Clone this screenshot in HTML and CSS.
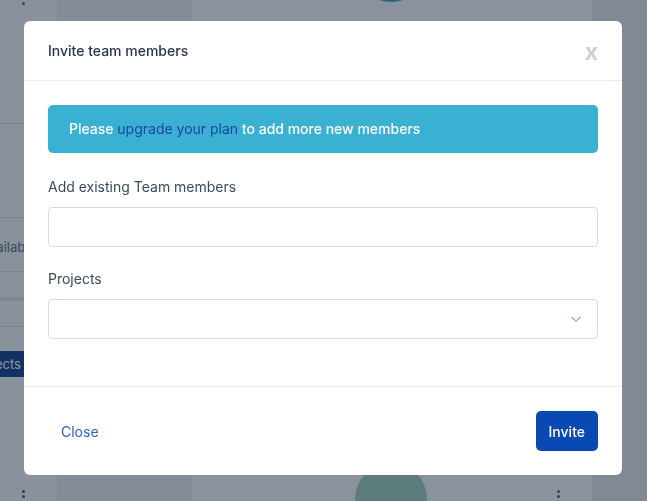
FILE: index.html
```html
<!DOCTYPE html>
<html lang="en">

<head>
    <meta charset="UTF-8" />
    <meta name="viewport" content="width=device-width, initial-scale=1.0" />
    <title>Invite team members</title>
    <link rel="stylesheet" href="styles.css">
</head>

<body>
    <!-- page behind the modal -->
    <div class="page">
        <div class="rail">
            <span class="dots top"></span>
            <div class="rows">
                <div class="row r1"></div>
                <div class="row r2"><span>Available</span></div>
                <div class="row r3"></div>
                <div class="row r4"></div>
                <div class="row r5"><span class="btn-dark">Projects</span></div>
            </div>
            <span class="dots bottom"></span>
        </div>
        <div class="col-side"></div>
        <div class="col-main">
            <span class="avatar top"></span>
            <span class="avatar bottom"></span>
            <span class="dots right"></span>
        </div>
        <div class="col-edge"></div>
    </div>

    <div class="backdrop"></div>

    <div class="modal">
        <div class="modal-header">
            <h5>Invite team members</h5>
            <button type="button" class="close">x</button>
        </div>
        <div class="modal-body">
            <div class="alert">
                Please <a href="#">upgrade your plan</a> to add more new members
            </div>
            <div class="form-group first">
                <label for="members">Add existing Team members</label>
                <input type="text" id="members" />
            </div>
            <div class="form-group">
                <label for="projects">Projects</label>
                <div class="select" id="projects">
                    <svg width="12" height="8" viewBox="0 0 12 8">
                        <path d="M1.5 2 L6 6.2 L10.5 2" fill="none" stroke="#9aa8bf" stroke-width="1.2" />
                    </svg>
                </div>
            </div>
        </div>
        <div class="modal-footer">
            <button type="button" class="btn-link">Close</button>
            <button type="button" class="btn-primary">Invite</button>
        </div>
    </div>
</body>

</html>
```

FILE: styles.css
```css
body {
    margin: 0;
    font-family: Inter, "Noto Sans", sans-serif;
    font-size: 14px;
    color: #2c3a4d;
    overflow: hidden;
}

.page {
    display: flex;
    height: 501px;
    overflow: hidden;
    background-color: #fbfcfe;
}

.rail {
    width: 57px;
    position: relative;
    overflow: hidden;
    background-color: #f9fafc;
}

.rows {
    padding-top: 123px;
}

.row {
    border-top: 1px solid #d9dee6;
    display: flex;
    align-items: center;
    white-space: nowrap;
}

.r1 {
    height: 93px;
}

.r2 {
    height: 54px;
    color: #5c6b80;
    font-size: 13px;
    padding-top: 4px;
    box-sizing: border-box;
}

.r2 span {
    margin-left: -19px;
}

.r3 {
    height: 25px;
}

.r4 {
    height: 25px;
    border-top: 4px solid #e3e7ed;
}

.r5 {
    height: 75px;
    align-items: flex-start;
}

.btn-dark {
    background-color: #0a3d8c;
    color: #fff;
    font-size: 13px;
    line-height: 26px;
    padding: 0 8px;
    margin: 24px 0 0 -37px;
}

.dots {
    position: absolute;
    width: 3px;
    height: 3px;
    border-radius: 50%;
    background-color: #3b5d99;
    box-shadow: 0 5px 0 #3b5d99;
}

.dots.top {
    left: 22px;
    top: -3px;
}

.dots.bottom {
    left: 22px;
    top: 490px;
}

.dots.right {
    right: 32px;
    top: 490px;
}

.col-side {
    width: 135px;
    background-color: #eef1f8;
}

.col-main {
    flex: 1;
    position: relative;
    overflow: hidden;
    background-color: #fbfcfe;
}

.avatar {
    position: absolute;
    width: 72px;
    height: 72px;
    border-radius: 50%;
    left: 163px;
}

.avatar.top {
    top: -70px;
    background-color: #3fa3b0;
}

.avatar.bottom {
    top: 463px;
    background-color: #9ed0bc;
}

.col-edge {
    width: 55px;
    background-color: #e8ebf2;
}

.backdrop {
    position: fixed;
    inset: 0;
    background-color: rgba(25, 40, 60, 0.5);
}

.modal {
    position: fixed;
    left: 24px;
    top: 21px;
    width: 598px;
    background-color: #fff;
    border-radius: 6px;
}

.modal-header {
    display: flex;
    align-items: center;
    justify-content: space-between;
    height: 59px;
    padding: 0 24px;
    border-bottom: 1px solid #e6ecf4;
}

.modal-header h5 {
    margin: 0;
    font-size: 14px;
    font-weight: 500;
    color: #2a3547;
}

.close {
    background: none;
    border: none;
    padding: 0;
    margin: 2px 0 0;
    font-family: inherit;
    font-size: 23px;
    line-height: 20px;
    font-weight: 700;
    color: #c8d2df;
    cursor: pointer;
}

.modal-body {
    padding: 24px 24px 47px;
}

.alert {
    height: 48px;
    line-height: 48px;
    padding: 0 21px;
    border-radius: 5px;
    background-color: #3ab0d3;
    color: #fff;
    font-weight: 500;
}

.alert a {
    color: #1846a6;
    font-weight: 400;
    text-decoration: none;
}

.form-group {
    margin-top: 22px;
}

.form-group.first {
    margin-top: 24px;
}

label {
    display: block;
    line-height: 20px;
    margin-bottom: 10px;
    color: #3d4a5c;
}

input,
.select {
    display: block;
    box-sizing: border-box;
    width: 100%;
    height: 40px;
    border: 1px solid #d4dde9;
    border-radius: 4px;
    outline: none;
    margin: 0;
}

.select {
    display: flex;
    align-items: center;
    justify-content: flex-end;
    padding-right: 15px;
}

.modal-footer {
    display: flex;
    align-items: center;
    justify-content: space-between;
    padding: 24px;
    border-top: 1px solid #e6ecf4;
}

.btn-link,
.btn-primary {
    height: 40px;
    border: none;
    border-radius: 5px;
    font-family: inherit;
    font-size: 14px;
    padding: 0 13px;
    cursor: pointer;
}

.btn-link {
    background: none;
    color: #2d63c6;
}

.btn-primary {
    background-color: #0849b4;
    color: #fff;
    font-weight: 500;
}
```
